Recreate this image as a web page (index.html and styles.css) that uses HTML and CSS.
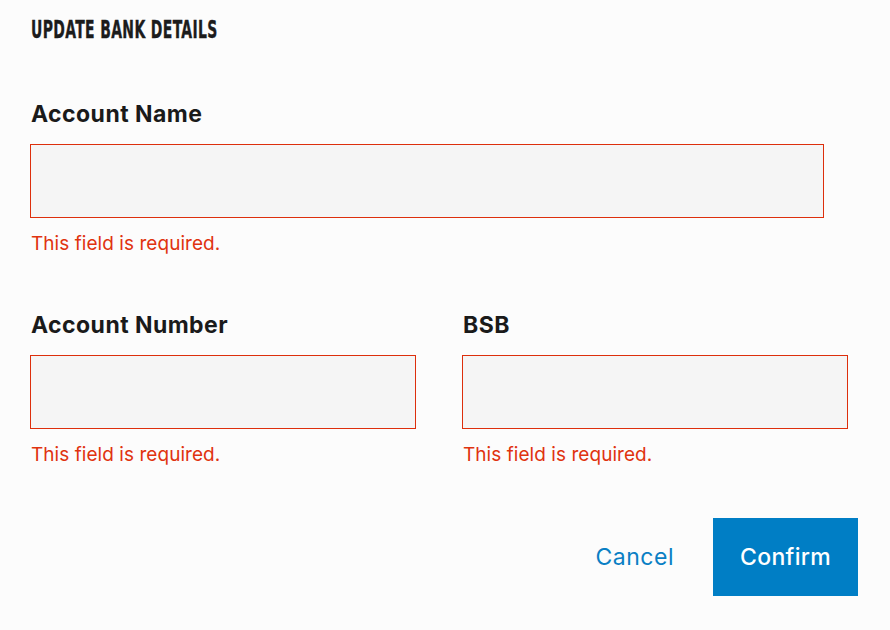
FILE: index.html
```html
<!DOCTYPE html>
<html lang="en">
<head>
<meta charset="utf-8">
<title>Update Bank Details</title>
<link rel="stylesheet" href="styles.css">
</head>
<body>
<div class="dialog">
  <h1 class="title"><span>UPDATE BANK DETAILS</span></h1>
  <form class="form">
    <div class="field field-wide">
      <label class="label" for="acc-name">Account Name</label>
      <input class="input" id="acc-name" type="text">
      <div class="error">This field is required.</div>
    </div>
    <div class="row">
      <div class="field">
        <label class="label" for="acc-num">Account Number</label>
        <input class="input" id="acc-num" type="text">
        <div class="error">This field is required.</div>
      </div>
      <div class="field">
        <label class="label" for="bsb">BSB</label>
        <input class="input" id="bsb" type="text">
        <div class="error">This field is required.</div>
      </div>
    </div>
    <div class="actions">
      <button type="button" class="btn-cancel">Cancel</button>
      <button type="button" class="btn-confirm">Confirm</button>
    </div>
  </form>
</div>
</body>
</html>
```
FILE: styles.css
```css
* { box-sizing: border-box; }
html, body { margin: 0; padding: 0; }
body {
  background: #fcfcfc;
  font-family: Inter, "Noto Sans", sans-serif;
  color: #1a1a1a;
  width: 890px;
  height: 630px;
  overflow: hidden;
}
.dialog {
  padding: 17px 32px 0 30px;
  width: 890px;
}
.title {
  margin: 0;
  font-family: "DejaVu Sans Condensed", "Liberation Sans", sans-serif;
  font-weight: 700;
  font-size: 25px;
  line-height: 26px;
  color: #1c1c1c;
  height: 26px;
  padding-left: 1px;
  white-space: nowrap;
}
.title span {
  display: inline-block;
  transform: scaleX(0.62);
  transform-origin: left center;
  letter-spacing: 0.6px;
  -webkit-text-stroke: 0.4px #1c1c1c;
}
.form { display: flex; flex-direction: column; }
.field { display: flex; flex-direction: column; }
.field-wide { width: 794px; margin-top: 57px; }
.label {
  font-weight: 700;
  font-size: 23px;
  line-height: 28px;
  padding-left: 1px;
  letter-spacing: 0.45px;
}
.input {
  margin-top: 16px;
  height: 74px;
  width: 100%;
  background: #f5f5f5;
  border: 1px solid #dd2f0c;
  border-radius: 0;
  font: inherit;
  outline: none;
}
.error {
  margin-top: 14px;
  font-size: 19px;
  line-height: 24px;
  color: #e0330f;
  padding-left: 1px;
  letter-spacing: 0.05px;
}
.row {
  display: grid;
  grid-template-columns: 386px 386px;
  column-gap: 46px;
  margin-top: 55px;
}
.actions {
  display: flex;
  justify-content: flex-end;
  align-items: center;
  margin-top: 51px;
  gap: 22px;
}
.btn-cancel {
  background: none;
  border: none;
  font-family: Inter, sans-serif;
  font-size: 23px;
  letter-spacing: 0.5px;
  color: #0a7fc4;
  padding: 0 17px 0 18px;
  height: 78px;
  cursor: pointer;
}
.btn-confirm {
  background: #007ec5;
  color: #ffffff;
  border: none;
  font-family: Inter, sans-serif;
  font-size: 23px;
  font-weight: 500;
  letter-spacing: 0.3px;
  width: 145px;
  height: 78px;
  cursor: pointer;
}
```
